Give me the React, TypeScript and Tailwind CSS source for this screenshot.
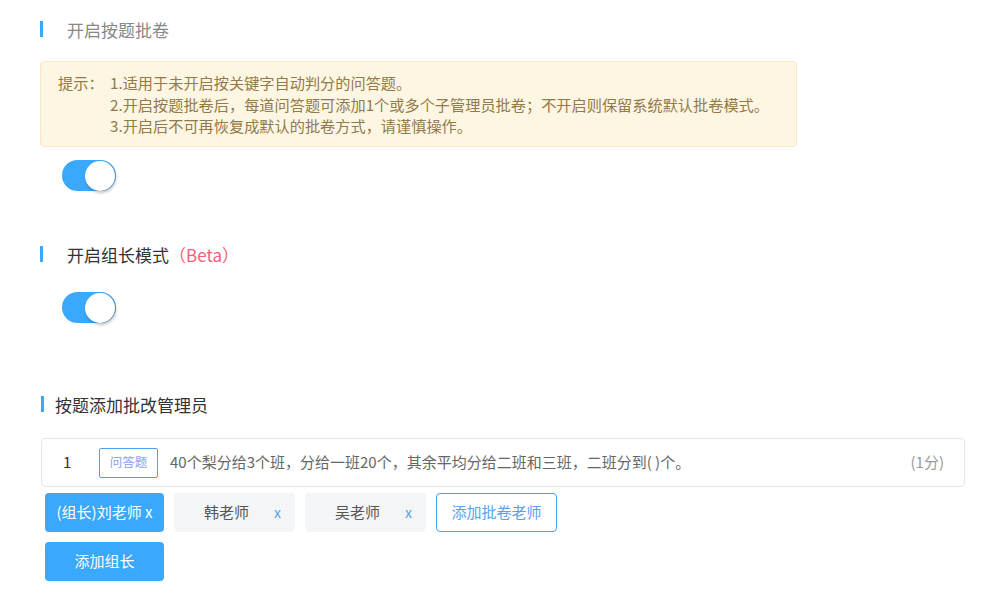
import React from "react";

const font = { fontFamily: '"Noto Sans CJK SC", "Noto Sans", sans-serif' };

function Toggle() {
  return (
    <div className="relative w-[54px] h-[31px] rounded-full bg-[#3aa8fb]">
      <div className="absolute right-[1px] top-[0.5px] w-[30px] h-[30px] rounded-full bg-white shadow-[1px_2px_3px_rgba(0,0,0,0.25)]" />
    </div>
  );
}

function Chip({ name }: { name: string }) {
  return (
    <div className="w-[121px] h-[39px] rounded-[4px] bg-[#f4f5f7] flex items-center text-[15px]">
      <span className="ml-[30px] text-[#555]">{name}</span>
      <span className="ml-auto mr-[14px] text-[#5a9ff0] text-[14px]">x</span>
    </div>
  );
}

export default function App() {
  return (
    <div className="w-[998px] h-[596px] bg-white overflow-hidden" style={font}>
      <div className="pl-[40px] pt-[18px]">
        {/* Section 1 */}
        <div className="flex items-center h-[22px]">
          <div className="w-[3px] h-[16px] bg-[#3aa8fb]" />
          <span className="ml-[24px] text-[17px] text-[#888] leading-none">开启按题批卷</span>
        </div>
        <div className="mt-[21px] w-[757px] h-[86px] rounded-[4px] border border-[#f6e9c4] bg-[#fdf6e3] pl-[17px] pt-[10px] flex text-[15.2px] leading-[21.5px] text-[#94794a]">
          <div className="w-[52px] shrink-0">提示：</div>
          <div>
            <div>1.适用于未开启按关键字自动判分的问答题。</div>
            <div>2.开启按题批卷后，每道问答题可添加1个或多个子管理员批卷；不开启则保留系统默认批卷模式。</div>
            <div>3.开启后不可再恢复成默认的批卷方式，请谨慎操作。</div>
          </div>
        </div>
        <div className="mt-[13px] ml-[22px]">
          <Toggle />
        </div>

        {/* Section 2 */}
        <div className="mt-[52px] flex items-center h-[22px]">
          <div className="w-[3px] h-[16px] bg-[#3aa8fb]" />
          <span className="ml-[24px] text-[17px] text-[#333] leading-none">
            开启组长模式<span className="text-[#f3607a]">（Beta）</span>
          </span>
        </div>
        <div className="mt-[27px] ml-[22px]">
          <Toggle />
        </div>

        {/* Section 3 */}
        <div className="mt-[70px] ml-[1px] flex items-center h-[22px]">
          <div className="w-[3px] h-[16px] bg-[#3aa8fb]" />
          <span className="ml-[11px] text-[17px] text-[#333] leading-none">按题添加批改管理员</span>
        </div>

        <div className="mt-[23px] ml-[1px] w-[924px] h-[49px] rounded-[4px] border border-[#e6e6e6] flex items-center text-[15px]">
          <span className="ml-[21px] w-[16px] text-[#333]">1</span>
          <span className="ml-[20px] w-[59px] h-[30px] border border-[#4aa3f7] rounded-[2px] flex items-center justify-center text-[12.5px] text-[#8c9ff5]">
            问答题
          </span>
          <span className="ml-[12px] text-[#666]">40个梨分给3个班，分给一班20个，其余平均分给二班和三班，二班分到( )个。</span>
          <span className="ml-auto mr-[20px] text-[#999]">(1分)</span>
        </div>

        <div className="mt-[6px] ml-[5px] flex gap-[10px]">
          <div className="w-[119px] h-[39px] rounded-[4px] bg-[#3aa8fb] text-white text-[15px] flex items-center justify-center">
            (组长)刘老师 x
          </div>
          <Chip name="韩老师" />
          <Chip name="吴老师" />
          <div className="w-[121px] h-[39px] rounded-[4px] border border-[#3aa8fb] bg-white text-[#5a9ff0] text-[15px] flex items-center justify-center">
            添加批卷老师
          </div>
        </div>
        <div className="mt-[10px] ml-[5px] w-[119px] h-[39px] rounded-[4px] bg-[#3aa8fb] text-white text-[15px] flex items-center justify-center">
          添加组长
        </div>
      </div>
    </div>
  );
}
